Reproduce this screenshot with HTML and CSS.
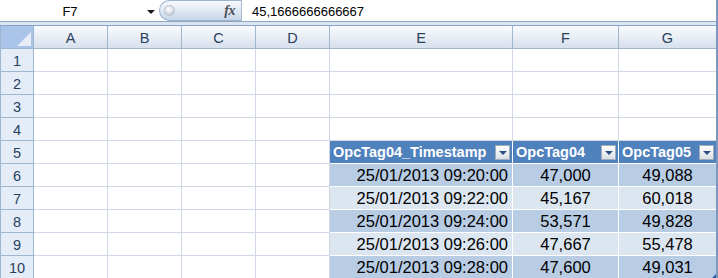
FILE: index.html
```html
<!DOCTYPE html>
<html lang="es">
  <head>
    <meta charset="UTF-8" />
    <meta name="viewport" content="width=device-width, initial-scale=1.0" />
    <title>Hoja1</title>
    <link rel="stylesheet" href="styles.css">
  </head>
  <body>
    <div class="window">
      <!-- Barra de fórmulas -->
      <div class="formulaBar">
        <div class="nameBox">
          <span class="cellName">F7</span>
          <span class="nameArrow"></span>
        </div>
        <div class="fxPill">
          <span class="knob"></span>
          <span class="fx">fx</span>
        </div>
        <div class="formula">45,1666666666667</div>
      </div>
      <div class="strip"></div>

      <!-- Hoja -->
      <div class="sheet">
        <div class="corner"></div>
        <div class="colHead">A</div>
        <div class="colHead">B</div>
        <div class="colHead">C</div>
        <div class="colHead">D</div>
        <div class="colHead">E</div>
        <div class="colHead">F</div>
        <div class="colHead">G</div>

        <div class="rowHead">1</div>
        <div class="cell"></div><div class="cell"></div><div class="cell"></div><div class="cell"></div>
        <div class="cell"></div><div class="cell"></div><div class="cell"></div>

        <div class="rowHead">2</div>
        <div class="cell"></div><div class="cell"></div><div class="cell"></div><div class="cell"></div>
        <div class="cell"></div><div class="cell"></div><div class="cell"></div>

        <div class="rowHead">3</div>
        <div class="cell"></div><div class="cell"></div><div class="cell"></div><div class="cell"></div>
        <div class="cell"></div><div class="cell"></div><div class="cell"></div>

        <div class="rowHead">4</div>
        <div class="cell"></div><div class="cell"></div><div class="cell"></div><div class="cell"></div>
        <div class="cell"></div><div class="cell"></div><div class="cell"></div>

        <div class="rowHead">5</div>
        <div class="cell"></div><div class="cell"></div><div class="cell"></div><div class="cell"></div>
        <div class="cell th">OpcTag04_Timestamp<span class="filter"></span></div>
        <div class="cell th">OpcTag04<span class="filter"></span></div>
        <div class="cell th">OpcTag05<span class="filter"></span></div>

        <div class="rowHead">6</div>
        <div class="cell"></div><div class="cell"></div><div class="cell"></div><div class="cell"></div>
        <div class="cell dark date">25/01/2013 09:20:00</div>
        <div class="cell dark num">47,000</div>
        <div class="cell dark num">49,088</div>

        <div class="rowHead">7</div>
        <div class="cell"></div><div class="cell"></div><div class="cell"></div><div class="cell"></div>
        <div class="cell light date">25/01/2013 09:22:00</div>
        <div class="cell light num">45,167</div>
        <div class="cell light num">60,018</div>

        <div class="rowHead">8</div>
        <div class="cell"></div><div class="cell"></div><div class="cell"></div><div class="cell"></div>
        <div class="cell dark date">25/01/2013 09:24:00</div>
        <div class="cell dark num">53,571</div>
        <div class="cell dark num">49,828</div>

        <div class="rowHead">9</div>
        <div class="cell"></div><div class="cell"></div><div class="cell"></div><div class="cell"></div>
        <div class="cell light date">25/01/2013 09:26:00</div>
        <div class="cell light num">47,667</div>
        <div class="cell light num">55,478</div>

        <div class="rowHead">10</div>
        <div class="cell"></div><div class="cell"></div><div class="cell"></div><div class="cell"></div>
        <div class="cell dark date">25/01/2013 09:28:00</div>
        <div class="cell dark num">47,600</div>
        <div class="cell dark num">49,031<span class="resize"></span></div>
      </div>
    </div>
  </body>
</html>
```

FILE: styles.css
```css
* {
  box-sizing: border-box;
}

body {
  margin: 0;
  padding: 0;
  background: #ffffff;
  font-family: "Liberation Sans", Arial, sans-serif;
  overflow: hidden;
}

.window {
  width: 718px;
  height: 278px;
  border-right: 2px solid #7d98bf;
  overflow: hidden;
}

/* ===== Barra de fórmulas ===== */
.formulaBar {
  display: flex;
  height: 22px;
  border-bottom: 1px solid #8ea6c6;
  background: #ffffff;
  font-size: 13px;
  color: #000000;
}

.nameBox {
  display: flex;
  align-items: center;
  width: 159px;
  padding-top: 2px;
}

.cellName {
  width: 140px;
  text-align: center;
}

.nameArrow {
  width: 0;
  height: 0;
  margin-left: 7px;
  border-left: 4px solid transparent;
  border-right: 4px solid transparent;
  border-top: 4px solid #1b1b1b;
}

.fxPill {
  display: flex;
  align-items: center;
  justify-content: space-between;
  width: 82px;
  height: 21px;
  padding: 0 4px 0 4px;
  border: 1px solid #9fb3cf;
  border-right: none;
  border-radius: 11px 0 0 11px;
  background: linear-gradient(#f7f9fc 0%, #e3eaf4 45%, #c9d6e8 100%);
}

.knob {
  width: 11px;
  height: 11px;
  border-radius: 50%;
  border: 1px solid #b9c4d2;
  background: radial-gradient(circle at 40% 35%, #ffffff 0%, #d9dde3 55%, #9ea7b3 100%);
}

.fx {
  font-family: "Liberation Serif", "Times New Roman", serif;
  font-style: italic;
  font-weight: bold;
  font-size: 14px;
  color: #4a4f57;
  margin-right: 2px;
  letter-spacing: -0.5px;
}

.formula {
  flex: 1;
  padding: 2px 0 0 10px;
  line-height: 19px;
  border-left: 1px solid #a9b9cf;
}

.strip {
  height: 3px;
  background: #dce6f3;
  border-bottom: 1px solid #88a3c8;
  box-sizing: content-box;
}

/* ===== Hoja ===== */
.sheet {
  display: grid;
  grid-template-columns: 34px 74px 74px 74px 74px 183px 106px 98px;
  grid-auto-rows: 23px;
  font-size: 16.5px;
}

.corner {
  position: relative;
  background: #a9c4e8;
  border-left: 1px solid #9eb6ce;
  border-right: 1px solid #9eb6ce;
  border-bottom: 1px solid #9eb6ce;
}

.corner:after {
  content: "";
  position: absolute;
  right: 2px;
  bottom: 2px;
  width: 0;
  height: 0;
  border-left: 14px solid transparent;
  border-bottom: 14px solid #e6edf7;
}

.colHead {
  display: flex;
  align-items: center;
  justify-content: center;
  background: linear-gradient(#f9fbfd 0%, #e9eef5 50%, #d6dfec 100%);
  border-right: 1px solid #9eb6ce;
  border-bottom: 1px solid #9eb6ce;
  color: #27415f;
  font-size: 14.5px;
  padding-top: 1px;
}

.rowHead {
  display: flex;
  align-items: center;
  justify-content: center;
  background: #e4ecf7;
  border-left: 1px solid #9eb6ce;
  border-right: 1px solid #9eb6ce;
  border-bottom: 1px solid #9eb6ce;
  color: #27415f;
  font-size: 14.5px;
  padding-top: 1px;
}

.cell {
  border-right: 1px solid #d0d7e5;
  border-bottom: 1px solid #d0d7e5;
  line-height: 22px;
  white-space: nowrap;
  color: #000000;
}

.th {
  display: flex;
  align-items: center;
  justify-content: space-between;
  padding: 0 2px 0 3px;
  background: #4f81bd;
  border-right-color: #ffffff;
  border-bottom-color: #ffffff;
  color: #ffffff;
  font-weight: bold;
  font-size: 14.5px;
}

.filter {
  position: relative;
  width: 15px;
  height: 15px;
  border: 1px solid #a3adba;
  background: linear-gradient(#ffffff 0%, #eef1f4 50%, #d9dee5 100%);
}

.filter:after {
  content: "";
  position: absolute;
  left: 3px;
  top: 5px;
  border-left: 4px solid transparent;
  border-right: 4px solid transparent;
  border-top: 4px solid #2d4f80;
}

.dark {
  background: #b8cce4;
  border-right-color: #ffffff;
  border-bottom-color: #ffffff;
}

.light {
  background: #dce6f1;
  border-right-color: #ffffff;
  border-bottom-color: #ffffff;
}

.date {
  text-align: right;
  padding-right: 4px;
}

.num {
  text-align: center;
}

.sheet > .cell:nth-child(8n) {
  border-right-color: transparent;
}

.num:last-child {
  position: relative;
}

.resize {
  position: absolute;
  right: 0;
  bottom: 0;
  width: 0;
  height: 0;
  border-left: 4px solid transparent;
  border-bottom: 4px solid #2d5ea8;
}
```
